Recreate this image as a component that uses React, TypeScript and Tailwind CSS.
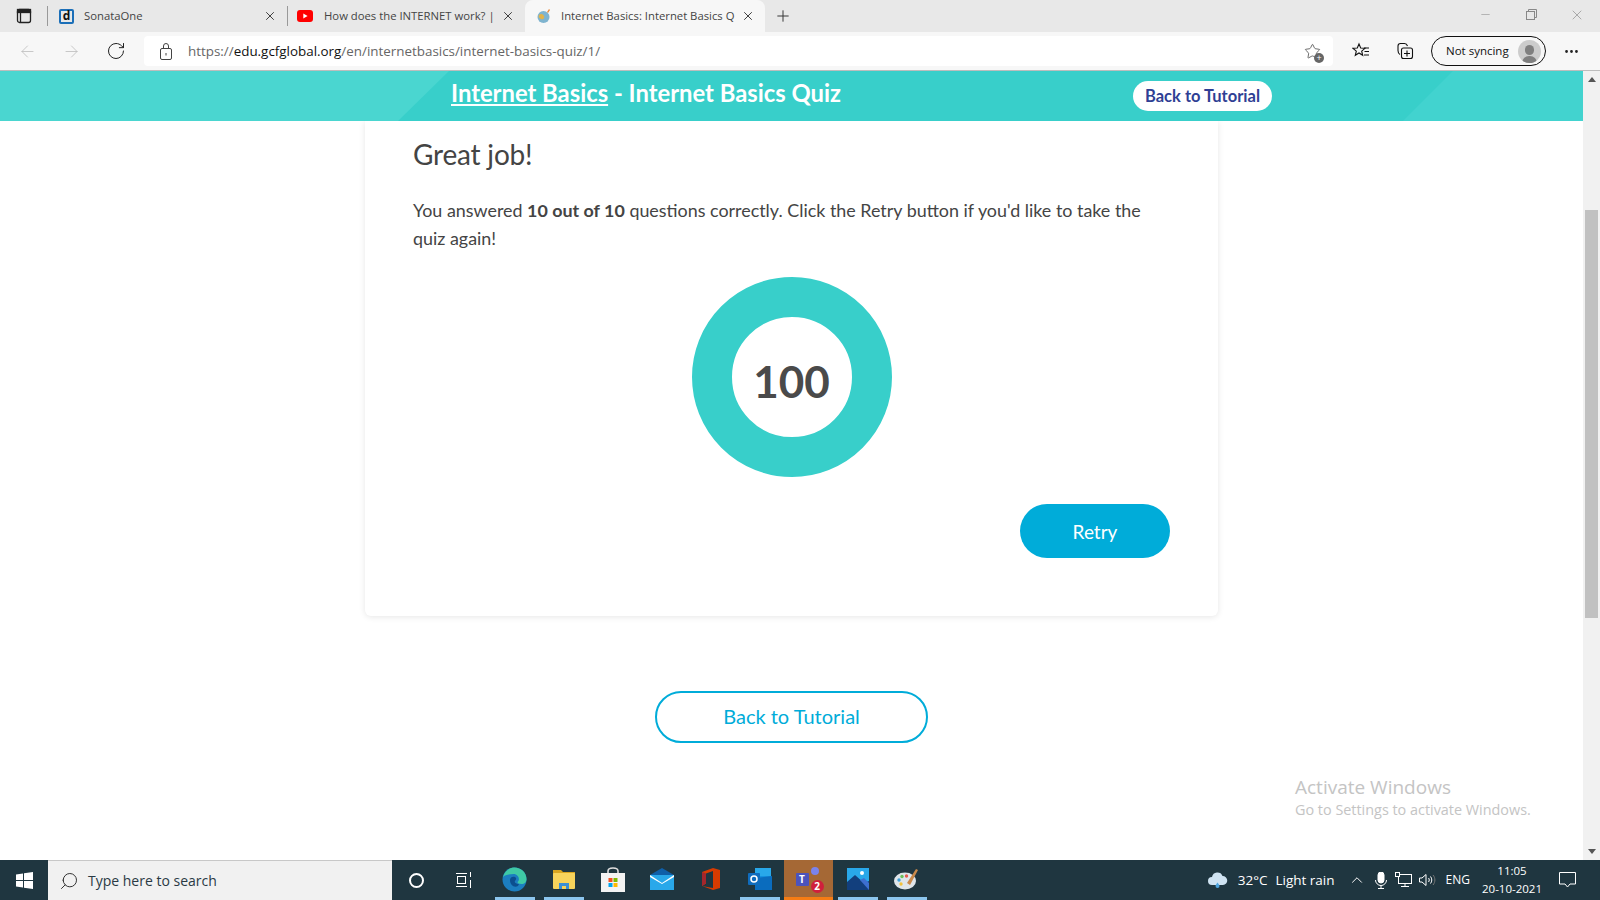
import { ArrowLeft, ArrowRight, RotateCw, Star, Plus, X, Minus, ChevronUp, Search, MoreHorizontal } from "lucide-react";
import type { ReactNode } from "react";

const page = { fontFamily: "Lato, sans-serif" };

function Tab({ icon, title, active, width }: { icon: ReactNode; title: string; active?: boolean; width: string }) {
  return (
    <div className={`flex h-8 shrink-0 items-center pl-[10px] pr-[10px] ${width} ${active ? "rounded-t-lg bg-[#f7f7f7]" : ""}`}>
      <div className="flex w-[17px] shrink-0 justify-center">{icon}</div>
      <span className="ml-[9px] flex-1 whitespace-nowrap text-[11.3px] text-[#444]">{title}</span>
      <X size={14} strokeWidth={1.6} className="ml-[2px] shrink-0 text-[#333]" />
    </div>
  );
}

function TaskIcon({ children, state }: { children: ReactNode; state?: "open" | "active" }) {
  return (
    <div className={`flex h-10 w-[49px] shrink-0 flex-col items-center ${state === "active" ? "bg-[#a56835]" : ""}`}>
      <div className="flex flex-1 items-center justify-center pt-px">{children}</div>
      <div className={`h-[3px] ${state === "active" ? "w-full bg-[#f57c14]" : state === "open" ? "w-[40px] bg-[#8cc6ee]" : ""}`} />
    </div>
  );
}

function Tabs() {
  return (
    <div className="flex h-8 items-center bg-[#e8e8e8]">
      <div className="flex w-[47px] shrink-0 justify-center">
        <svg width="16" height="16" viewBox="0 0 16 16" fill="none" stroke="#222" strokeWidth="1.3">
          <rect x="1.5" y="1.5" width="13" height="13" rx="2" />
          <rect x="1.5" y="1.5" width="13" height="3" fill="#222" />
          <path d="M4.5 4v10" />
        </svg>
      </div>
      <div className="h-[20px] w-px bg-[#999]" />
      <Tab
        width="w-[239px]"
        title="SonataOne"
        icon={
          <span className="flex h-[15px] w-[15px] items-center justify-center rounded-[2px] border-2 border-[#1b6fb8] text-[12px] font-bold leading-none text-[#111]">d</span>
        }
      />
      <div className="h-[20px] w-px bg-[#999]" />
      <Tab
        width="w-[237px]"
        title="How does the INTERNET work? |"
        icon={
          <svg className="-ml-[4px]" width="16" height="12" viewBox="0 0 16 12">
            <rect width="16" height="12" rx="3" fill="#f00" />
            <path d="M6.3 3.4 10.6 6l-4.3 2.6z" fill="#fff" />
          </svg>
        }
      />
      <Tab
        active
        width="w-[240px]"
        title="Internet Basics: Internet Basics Q"
        icon={
          <svg width="16" height="16" viewBox="0 0 16 16">
            <circle cx="7.5" cy="9" r="6" fill="#7fb4cf" />
            <path d="M3 7c2-2 4-1 5 1s-1 4-3 3-3-2-2-4z" fill="#e2b34a" />
            <path d="M11 4l2-3 1 1-2 3z" fill="#e88a3c" />
          </svg>
        }
      />
      <Plus size={18} strokeWidth={1.3} className="ml-[9px] text-[#333]" />
      <div className="-mt-[3px] ml-auto flex items-center text-[#888]">
        <div className="flex w-[46px] justify-center">
          <Minus size={13} strokeWidth={1} />
        </div>
        <div className="flex w-[46px] justify-center">
          <svg width="11" height="11" viewBox="0 0 11 11" fill="none" stroke="#888">
            <rect x="0.5" y="2.5" width="8" height="8" />
            <path d="M2.5 2.5v-2h8v8h-2" />
          </svg>
        </div>
        <div className="flex w-[46px] justify-center">
          <X size={16} strokeWidth={1} />
        </div>
      </div>
    </div>
  );
}

function Toolbar() {
  return (
    <div className="flex h-[39px] items-center border-b border-[#bdbdbd] bg-[#f7f7f7]">
      <div className="flex w-[144px] shrink-0 items-center">
        <div className="flex w-[55px] justify-center">
          <ArrowLeft size={19} strokeWidth={1} className="text-[#bbb]" />
        </div>
        <div className="flex w-[33px] justify-center">
          <ArrowRight size={19} strokeWidth={1} className="text-[#bbb]" />
        </div>
        <div className="flex w-[55px] justify-center">
          <RotateCw size={20} strokeWidth={1.2} className="text-[#222]" />
        </div>
      </div>
      <div className="flex h-[30px] w-[1189px] shrink-0 items-center rounded bg-white pl-[16px] pr-[12px]">
        <svg width="12" height="17" viewBox="0 0 12 17" fill="none" stroke="#444">
          <rect x="0.5" y="5.500" width="11" height="11" rx="1.500" />
          <path d="M3.500 5.500V3a2.500 2.500 0 0 1 5 0v2.500M6 10v2.500" />
        </svg>
        <span className="ml-[16px] text-[13.4px] text-[#666]">
          https://<span className="text-[#111]">edu.gcfglobal.org</span>/en/internetbasics/internet-basics-quiz/1/
        </span>
        <div className="relative ml-auto">
          <Star size={17} strokeWidth={1.1} className="text-[#444]" />
          <span className="absolute -bottom-[3px] -right-[3px] flex h-[10px] w-[10px] items-center justify-center rounded-full bg-[#666] text-[9px] leading-none text-white">+</span>
        </div>
      </div>
      <div className="flex w-[55px] shrink-0 justify-center pl-[1px]">
        <svg width="18" height="18" viewBox="0 0 18 18" fill="none" stroke="#111" strokeWidth="1.1">
          <path d="M7 2l1.7 4 4.3.3-3.3 2.8 1 4.2L7 11l-3.7 2.3 1-4.2L1 6.3 5.3 6z" />
          <path d="M12 6h5M12.5 9.5H17M12 13h5" />
        </svg>
      </div>
      <div className="flex w-[34px] shrink-0 justify-center">
        <svg width="18" height="18" viewBox="0 0 18 18" fill="none" stroke="#111" strokeWidth="1.1">
          <path d="M4 12.5c-2-1-2-2-2-4V4c0-1.500 1-2.500 2.500-2.500h4c1.500 0 2.500 1 3 2.500" />
          <rect x="5.500" y="6" width="11" height="10.500" rx="2" />
          <path d="M11 8.500v6M8 11.500h6" />
        </svg>
      </div>
      <div className="ml-[9px] flex h-[30px] w-[115px] shrink-0 items-center justify-between rounded-full border border-[#111] pl-[14px] pr-[4px]">
        <span className="whitespace-nowrap text-[11.5px] text-[#111]">Not syncing</span>
        <span className="flex h-[23px] w-[23px] flex-col items-center justify-end overflow-hidden rounded-full bg-[#ccc]">
          <span className="mb-[1px] h-[10px] w-[9px] rounded-full bg-[#7f7f7f]" />
          <span className="h-[7px] w-[15px] rounded-t-full bg-[#7f7f7f]" />
        </span>
      </div>
      <div className="flex flex-1 justify-center pr-[4px]">
        <MoreHorizontal size={17} strokeWidth={2} className="text-[#222]" />
      </div>
    </div>
  );
}

function Banner() {
  return (
    <div className="relative flex h-[50px] shrink-0 items-center bg-[#38cfca] pl-[451px]" style={page}>
      <div className="absolute inset-0 bg-[#4ad6d0] [clip-path:polygon(0_0,449px_0,398px_100%,0_100%)]" />
      <div className="absolute inset-0 bg-[#42d3cf] [clip-path:polygon(1453px_0,100%_0,100%_100%,1403px_100%)]" />
      <h1 className="relative w-[682px] pb-[4px] text-[23.8px] font-bold whitespace-nowrap text-white">
        <span className="underline underline-offset-2">Internet Basics</span> - Internet Basics Quiz
      </h1>
      <button className="relative -mt-px h-[30px] w-[139px] rounded-full bg-white pt-[2px] text-[16.5px] font-bold text-[#2f3f94]">Back to Tutorial</button>
    </div>
  );
}

function Result() {
  return (
    <div className="mx-auto h-[495px] w-[853px] rounded-b-md bg-white px-[48px] pt-[13px] shadow-[0_1px_6px_rgba(0,0,0,0.1)]">
      <h2 className="text-[28px] leading-[40px] tracking-[-0.2px] text-[#444]">Great job!</h2>
      <p className="mt-[22px] text-[17.9px] leading-[28px] text-[#444]">
        You answered <b>10 out of 10</b> questions correctly. Click the Retry button if you'd like to take the quiz again!
      </p>
      <div className="mt-[25px] flex justify-center">
        <div className="flex h-[200px] w-[200px] items-center justify-center rounded-full border-[40px] border-[#38cfca]">
          <span className="mt-[8px] text-[44px] font-bold leading-none text-[#4a4a4a]">100</span>
        </div>
      </div>
      <div className="mt-[27px] flex justify-end">
        <button className="h-[54px] w-[150px] rounded-full bg-[#00acd9] pt-[2px] text-[19px] text-white">Retry</button>
      </div>
    </div>
  );
}

function Taskbar() {
  return (
    <div className="flex h-10 shrink-0 items-center bg-[#1f3640] text-white" style={{ fontFamily: "'Open Sans', sans-serif" }}>
      <div className="flex w-[48px] justify-center">
        <svg width="17" height="17" viewBox="0 0 17 17" fill="#fff">
          <path d="M0 2.500 7 1.500V8H0zM8 1.300 17 0v8H8zM0 9h7v6.500l-7-1zM8 9h9v8l-9-1.300z" />
        </svg>
      </div>
      <div className="flex h-10 w-[344px] shrink-0 items-center border-t border-[#c8c8c8] bg-[#f1f1f1] pl-[11px] text-[#333]">
        <Search size={20} strokeWidth={1.2} className="-scale-x-100" />
        <span className="ml-[9px] text-[14px] text-[#2a3a44]">Type here to search</span>
      </div>
      <div className="flex w-[48px] justify-center">
        <span className="h-[15px] w-[15px] rounded-full border-2 border-white" />
      </div>
      <div className="flex w-[48px] justify-center">
        <svg width="16" height="16" viewBox="0 0 16 16" fill="none" stroke="#fff" strokeWidth="1">
          <path d="M0 1.500h11M0 14.500h11M14.500 0v5M14.500 8v8" />
          <rect x="1.500" y="4.500" width="8" height="7" />
        </svg>
      </div>
      <div className="w-[2px] shrink-0" />
      <TaskIcon state="open">
        <svg width="25" height="25" viewBox="0 0 25 25">
          <circle cx="12.500" cy="12.500" r="12" fill="#1c7ec0" />
          <path d="M1 10C3 3 8 .5 12.500.5 19 .5 24.500 5.500 24.500 12c0 3-2 5-5 5-2.500 0-4-1-4-2 3-2 1-8-4-8C7 7 2.500 8 1 10z" fill="#3fc9a5" />
          <path d="M8 13c0-3 3-4 5-3s1 3 0 4 1 3 4 3l-1 2c-4 2-8-1-8-6z" fill="#0c4f8f" />
        </svg>
      </TaskIcon>
      <TaskIcon state="open">
        <svg width="22" height="20" viewBox="0 0 22 20">
          <path d="M0 1h8l2 2h12v4H0z" fill="#d9a520" />
          <rect y="4" width="22" height="16" rx="1" fill="#f7d35b" />
          <path d="M6 20v-6h10v6h-3v-3H9v3z" fill="#3b8fd6" />
        </svg>
      </TaskIcon>
      <TaskIcon>
        <svg width="24" height="25" viewBox="0 0 24 25">
          <path d="M7 7V4c0-2 2-3 5-3s5 1 5 3v3" fill="none" stroke="#ddd" strokeWidth="1.6" />
          <rect y="6" width="24" height="19" fill="#f3f3f3" />
          <rect x="7.500" y="11" width="4" height="4" fill="#f25022" />
          <rect x="12.500" y="11" width="4" height="4" fill="#7fba00" />
          <rect x="7.500" y="16" width="4" height="4" fill="#00a4ef" />
          <rect x="12.500" y="16" width="4" height="4" fill="#ffb900" />
        </svg>
      </TaskIcon>
      <TaskIcon>
        <svg width="24" height="22" viewBox="0 0 24 22">
          <path d="M0 7 12 0l12 7-12 7z" fill="#0f5fa8" />
          <rect y="7" width="24" height="15" fill="#29a8ea" />
          <path d="M0 7l12 8 12-8v2L12 16 0 9z" fill="#fff" />
        </svg>
      </TaskIcon>
      <TaskIcon>
        <svg width="18" height="22" viewBox="0 0 18 22">
          <path d="M0 4 11 0l7 2v18l-7 2L0 18l11 2V3L4 5.500v10L0 18z" fill="#d83b01" />
          <path d="M0 4l4 1.500v10L0 18z" fill="#a4262c" />
        </svg>
      </TaskIcon>
      <TaskIcon state="open">
        <svg width="24" height="22" viewBox="0 0 24 22">
          <rect x="7" y="0" width="16" height="21" rx="1" fill="#1490df" />
          <path d="M7 10l17-2v14H7z" fill="#0a6cbe" />
          <path d="M7 0h16v8H7z" fill="#28a8ea" />
          <rect y="5" width="12" height="12" rx="1" fill="#0f6cbd" />
          <circle cx="6" cy="11" r="3" fill="none" stroke="#fff" strokeWidth="1.500" />
        </svg>
      </TaskIcon>
      <TaskIcon state="active">
        <div className="relative h-[24px] w-[26px]">
          <span className="absolute right-[3px] top-0 h-[8px] w-[8px] rounded-full bg-[#7b83eb]" />
          <span className="absolute left-0 top-[6px] flex h-[13px] w-[13px] items-center justify-center rounded-[1px] bg-[#4b53bc] text-[10px] font-bold text-white">T</span>
          <span className="absolute bottom-[-2px] right-[-2px] flex h-[13px] w-[13px] items-center justify-center rounded-full bg-[#d01f3c] text-[10px] font-bold text-white">2</span>
        </div>
      </TaskIcon>
      <TaskIcon state="open">
        <svg width="22" height="22" viewBox="0 0 22 22">
          <rect width="22" height="22" fill="#29a8ea" />
          <path d="M0 22V14L8 7l9 8 5-2v9z" fill="#123f7d" />
          <path d="M13 12l4-2 5 5v7z" fill="#3d6fd0" />
          <circle cx="15" cy="5" r="2" fill="#fff" />
        </svg>
      </TaskIcon>
      <TaskIcon state="open">
        <svg width="25" height="23" viewBox="0 0 25 23">
          <ellipse cx="11" cy="13" rx="11" ry="8.500" fill="#dfe5ea" />
          <circle cx="5" cy="12" r="1.700" fill="#3fa0d8" />
          <circle cx="8" cy="8.500" r="1.700" fill="#6bbf59" />
          <circle cx="12.500" cy="8" r="1.700" fill="#e35a4e" />
          <circle cx="7" cy="16" r="1.700" fill="#f2c23c" />
          <path d="M13 15 22 1l2 1-8 15z" fill="#c9894a" />
        </svg>
      </TaskIcon>
      <div className="ml-auto flex items-center">
        <svg width="21" height="16" viewBox="0 0 21 16" fill="#cfe3f2">
          <path d="M5 13a4 4 0 0 1 0-8 5.500 5.500 0 0 1 10.500-1A4.500 4.500 0 0 1 16 13z" />
          <path d="M10.500 10.500c1 1.500 2 2.500 2 3.500a2 2 0 0 1-4 0c0-1 1-2 2-3.500z" fill="#4ea5e0" />
        </svg>
        <span className="ml-[10px] pt-px text-[13.500px] whitespace-nowrap">32°C</span>
        <span className="ml-[8px] pt-px text-[13.500px] whitespace-nowrap">Light rain</span>
        <ChevronUp size={18} strokeWidth={1.3} className="ml-[13px]" />
        <svg className="ml-[9px]" width="12" height="17" viewBox="0 0 12 17" fill="none" stroke="#fff">
          <rect x="3" y="0" width="6" height="11" rx="3" fill="#fff" />
          <path d="M.5 8a5.500 5.500 0 0 0 11 0M6 13.500v3M3 16.500h6" />
        </svg>
        <svg className="ml-[8px]" width="17" height="16" viewBox="0 0 17 16" fill="none" stroke="#fff">
          <rect x="3.500" y="2.500" width="13" height="9" />
          <rect x="0.500" y="0.500" width="4" height="4" fill="#1f3640" />
          <path d="M10 11.500v3M6 14.500h8" />
        </svg>
        <svg className="ml-[7px]" width="17" height="14" viewBox="0 0 17 14" fill="none" stroke="#fff">
          <path d="M.5 5h2.500L7 1.500v11L3 9H.5z" />
          <path d="M9.500 5c1 1.200 1 2.800 0 4M11.500 3.500c1.700 2 1.700 5 0 7" />
          <path d="M14 2c2.500 3 2.500 7 0 10" stroke="#777" />
        </svg>
        <span className="ml-[10px] text-[12px]">ENG</span>
        <div className="ml-[13px] flex w-[58px] flex-col items-center text-[11.500px] leading-[18px]">
          <span>11:05</span>
          <span className="whitespace-nowrap">20-10-2021</span>
        </div>
        <div className="flex w-[59px] justify-center pr-[6px]">
          <svg width="17" height="16" viewBox="0 0 17 16" fill="none" stroke="#fff">
            <path d="M.5.5h16v11.500h-5.500L8.500 15 6 12H.5z" />
          </svg>
        </div>
      </div>
    </div>
  );
}

export default function App() {
  return (
    <div className="relative flex h-[900px] w-[1600px] flex-col overflow-hidden bg-white" style={{ fontFamily: "'Open Sans', sans-serif" }}>
      <Tabs />
      <Toolbar />
      <div className="flex min-h-0 flex-1">
        <main className="relative flex min-w-0 flex-1 flex-col" style={page}>
          <Banner />
          <Result />
          <button className="mx-auto mt-[75px] h-[52px] w-[273px] rounded-full border-2 border-[#00acd9] pb-[2px] text-[20px] text-[#00acd9]">Back to Tutorial</button>
          <div className="absolute left-[1295px] top-[703px] text-[#c4c4c4]" style={{ fontFamily: "'Open Sans', sans-serif" }}>
            <div className="text-[19px] leading-[26px]">Activate Windows</div>
            <div className="text-[14.400px] leading-[20px]">Go to Settings to activate Windows.</div>
          </div>
        </main>
        <div className="flex w-[17px] shrink-0 flex-col bg-[#f1f1f1]">
          <div className="flex h-[17px] items-center justify-center">
            <span className="border-x-[4px] border-b-[5px] border-x-transparent border-b-[#555]" />
          </div>
          <div className="mx-[2px] mt-[122px] h-[408px] bg-[#c1c1c1]" />
          <div className="mt-auto flex h-[17px] items-center justify-center">
            <span className="border-x-[4px] border-t-[5px] border-x-transparent border-t-[#555]" />
          </div>
        </div>
      </div>
      <Taskbar />
    </div>
  );
}
